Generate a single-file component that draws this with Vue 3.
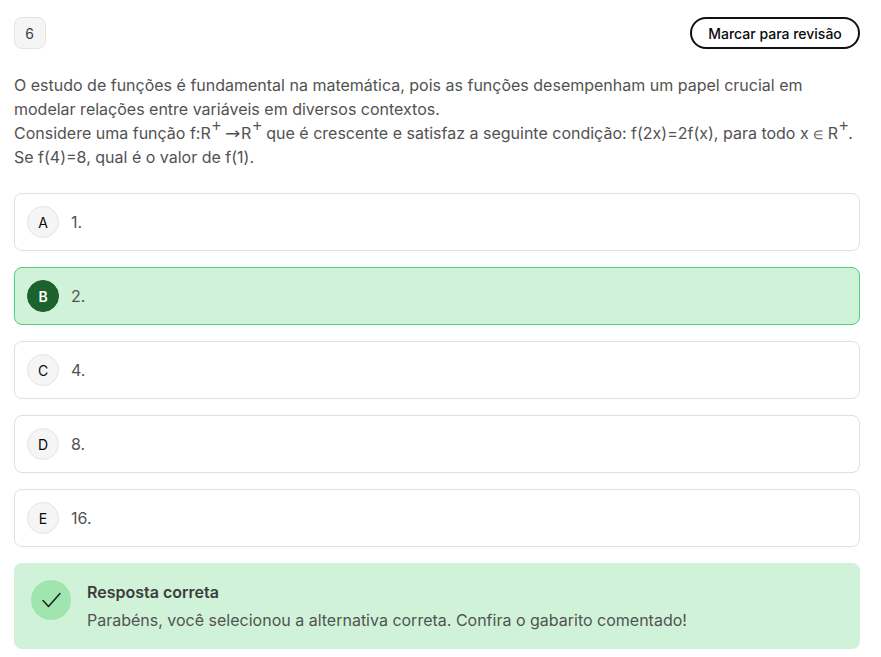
<template>
  <div class="question">
    <!-- cabeçalho -->
    <div class="question-header">
      <div class="question-number">6</div>
      <button class="review-button">Marcar para revisão</button>
    </div>

    <div class="statement">
      <p>O estudo de funções é fundamental na matemática, pois as funções desempenham um papel crucial em modelar relações entre variáveis em diversos contextos.</p>
      <p>Considere uma função f:R<span class="sup">+</span><span class="arrow">→</span>R<span class="sup">+</span> que é crescente e satisfaz a seguinte condição: f(2x)=2f(x), para todo x <span class="belongs">∈</span> R<span class="sup">+</span>.</p>
      <p>Se f(4)=8, qual é o valor de f(1).</p>
    </div>

    <!-- alternativas -->
    <div class="options">
      <div
        v-for="option in options"
        :key="option.letter"
        class="option"
        :class="{ selected: option.letter === selected }"
      >
        <span class="option-letter">{{ option.letter }}</span>
        <span class="option-text">{{ option.text }}</span>
      </div>
    </div>

    <!-- resultado -->
    <div class="feedback">
      <div class="feedback-icon">
        <svg width="24" height="24" viewBox="0 0 24 24" fill="none" xmlns="http://www.w3.org/2000/svg">
          <path d="M4 12.5L9.5 18.5L21 5.5" stroke="#1a1f1c" stroke-width="1.5" stroke-linecap="round" stroke-linejoin="round" />
        </svg>
      </div>
      <div class="feedback-body">
        <div class="feedback-title">Resposta correta</div>
        <div class="feedback-text">Parabéns, você selecionou a alternativa correta. Confira o gabarito comentado!</div>
      </div>
    </div>
  </div>
</template>

<script setup>
const selected = "B";

const options = [
  { letter: "A", text: "1." },
  { letter: "B", text: "2." },
  { letter: "C", text: "4." },
  { letter: "D", text: "8." },
  { letter: "E", text: "16." }
];
</script>

<style scoped>
* {
  box-sizing: border-box;
}

.question {
  width: 881px;
  padding: 17px 21px 8px 14px;
  font-family: Inter, "Liberation Sans", sans-serif;
  font-size: 16px;
  line-height: 24px;
  color: #525252;
}

.question-header {
  display: flex;
  justify-content: space-between;
  align-items: center;
  margin-bottom: 24px;
}

.question-number {
  width: 32px;
  height: 32px;
  display: flex;
  align-items: center;
  justify-content: center;
  padding: 1px 1px 0 0;
  background: #f5f5f5;
  border: 1px solid #e5e5e5;
  border-radius: 8px;
  font-size: 14px;
  color: #3d3d3d;
}

.review-button {
  width: 170px;
  height: 32px;
  padding: 0;
  background: #fff;
  border: 2px solid #111;
  border-radius: 16px;
  font-family: inherit;
  font-size: 14px;
  font-weight: 500;
  color: #0a0a0a;
}

.statement {
  margin-bottom: 24px;
}

.statement p {
  margin: 0;
}

.sup {
  position: relative;
  top: -8px;
  margin-left: 1px;
  line-height: 0;
  font-family: "Liberation Sans", sans-serif;
  font-size: 16px;
}

.arrow {
  display: inline-block;
  width: 16px;
  margin-left: 4px;
  line-height: 0;
  font-family: "DejaVu Sans", sans-serif;
  font-size: 16px;
  transform: scaleX(1.15);
  transform-origin: left center;
}

.belongs {
  line-height: 0;
  font-family: "Noto Sans", sans-serif;
  font-size: 12px;
}

.options {
  display: flex;
  flex-direction: column;
  gap: 16px;
  margin-bottom: 16px;
}

.option {
  height: 58px;
  display: flex;
  align-items: center;
  gap: 12px;
  padding: 0 12px;
  background: #fff;
  border: 1px solid #e0e0e0;
  border-radius: 8px;
}

.option.selected {
  background: #d0f2d8;
  border-color: #4fd074;
}

.option-letter {
  width: 32px;
  height: 32px;
  display: flex;
  align-items: center;
  justify-content: center;
  padding-top: 1px;
  background: #f5f5f5;
  border: 1px solid #e5e5e5;
  border-radius: 50%;
  font-size: 14px;
  font-weight: 400;
  color: #0a0a0a;
}

.selected .option-letter {
  background: #1b622d;
  border-color: #1b622d;
  color: #fff;
  font-weight: 600;
}

.feedback {
  height: 86px;
  display: flex;
  align-items: flex-start;
  gap: 16px;
  padding: 17px;
  background: #d0f2d8;
  border-radius: 8px;
}

.feedback-icon {
  width: 40px;
  height: 40px;
  flex-shrink: 0;
  display: flex;
  align-items: center;
  justify-content: center;
  background: #a0e5b0;
  border-radius: 50%;
}

.feedback-title {
  font-weight: 600;
  color: #3d3d3d;
  margin-bottom: 4px;
}
</style>
